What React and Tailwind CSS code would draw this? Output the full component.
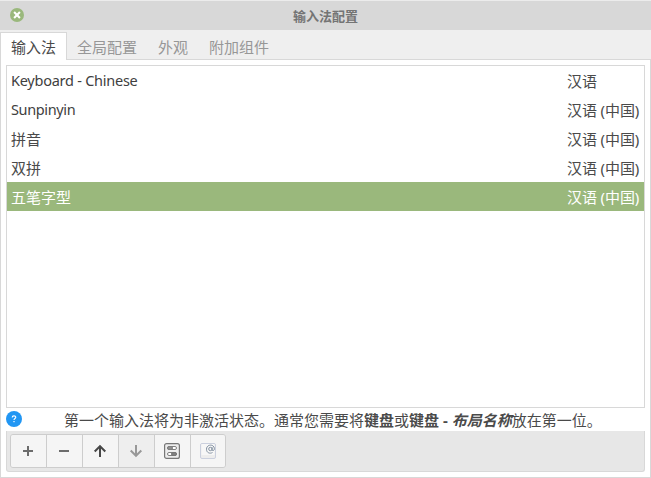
import React from "react";

const methods = [
  { name: "Keyboard - Chinese", lang: "汉语", latin: "pb-[2px] text-[14.5px] text-[#404040] tracking-[-0.25px]" },
  { name: "Sunpinyin", lang: "汉语 (中国)", latin: "pb-[2px] text-[14.5px] text-[#404040] tracking-[-0.37px]" },
  { name: "拼音", lang: "汉语 (中国)", latin: "" },
  { name: "双拼", lang: "汉语 (中国)", latin: "" },
  { name: "五笔字型", lang: "汉语 (中国)", latin: "", selected: true },
];

function CloseIcon() {
  return (
    <svg className="block" width="14" height="14" viewBox="0 0 14 14">
      <circle cx="7" cy="7" r="7" fill="#9ab87c" />
      <path d="M4.1 4.1l5.8 5.8M9.9 4.1l-5.8 5.8" stroke="#fff" strokeWidth="2.1" />
    </svg>
  );
}

function HelpIcon() {
  return (
    <svg width="16" height="16" viewBox="0 0 16 16">
      <circle cx="8" cy="8" r="8" fill="#2196f3" />
      <path d="M6.2 6.4c0-2 3.6-2 3.6-.1 0 1.2-1.8 1.2-1.8 2.7" fill="none" stroke="#fff" strokeWidth="1.1" />
      <rect x="7.4" y="10" width="1.2" height="1.2" fill="#fff" />
    </svg>
  );
}

function PlusIcon() {
  return (
    <svg width="16" height="16" viewBox="0 0 16 16">
      <path d="M3 8h10M8 3v10" stroke="#6c6c6c" strokeWidth="2" />
    </svg>
  );
}

function MinusIcon() {
  return (
    <svg width="16" height="16" viewBox="0 0 16 16">
      <path d="M3 8h10" stroke="#6c6c6c" strokeWidth="2" />
    </svg>
  );
}

function UpIcon() {
  return (
    <svg width="16" height="16" viewBox="0 0 16 16" fill="none" stroke="#484848" strokeWidth="2">
      <path d="M8 14V3.5M2.7 8.5L8 3.2l5.3 5.3" />
    </svg>
  );
}

function DownIcon() {
  return (
    <svg width="16" height="16" viewBox="0 0 16 16" fill="none" stroke="#989898" strokeWidth="2">
      <path d="M8 2v10.5M2.7 7.5L8 12.8l5.3-5.3" />
    </svg>
  );
}

function SettingsIcon() {
  return (
    <svg width="16" height="16" viewBox="0 0 16 16" fill="none">
      <rect x="0.6" y="0.6" width="14.8" height="14.8" rx="2" fill="#ededed" stroke="#777" strokeWidth="1.2" />
      <rect x="3.5" y="3.5" width="9" height="3" rx="1.5" fill="#fff" stroke="#808080" />
      <rect x="3.5" y="3.5" width="5" height="3" rx="1.5" fill="#909090" stroke="#808080" />
      <rect x="3.5" y="9.5" width="9" height="3" rx="1.5" fill="#fff" stroke="#808080" />
      <rect x="7.5" y="9.5" width="5" height="3" rx="1.5" fill="#808080" stroke="#777" />
    </svg>
  );
}

function KeyboardIcon() {
  return (
    <svg width="16" height="16" viewBox="0 0 16 16" fill="none">
      <rect x="0.5" y="0.5" width="15" height="15" rx="1.5" fill="#ededed" stroke="#cbd0de" />
      <path d="M1.5 1h13v11h-13z" fill="#f7f7f7" />
      <circle cx="10.4" cy="6" r="1.7" stroke="#8290a0" />
      <path d="M12.1 4.2v2.6c0 1.3 2.3 1.1 2.3-1 0-5-7.9-4.9-7.9.4 0 3.7 3.5 4.8 6 3.3" stroke="#8290a0" />
    </svg>
  );
}

const tools = [
  { label: "添加", Icon: PlusIcon },
  { label: "移除", Icon: MinusIcon },
  { label: "上移", Icon: UpIcon },
  { label: "下移", Icon: DownIcon, disabled: true },
  { label: "配置", Icon: SettingsIcon },
  { label: "键盘布局", Icon: KeyboardIcon },
];

export default function App() {
  return (
    <div className="flex h-[478px] w-[651px] flex-col overflow-hidden bg-white font-['Noto_Sans','Noto_Sans_CJK_SC',sans-serif] text-[15px] text-[#4a4a4a]">
      <header className="grid h-[30px] shrink-0 grid-cols-[1fr_auto_1fr] items-center border-t border-[#ececec] bg-[#d8d8d8] pl-[10px] pr-[10px]">
        <button className="pb-px" aria-label="关闭"><CloseIcon /></button>
        <h1 className="text-[13px] leading-[18px] font-bold text-[#747474]">输入法配置</h1>
      </header>

      <nav className="flex h-[30px] shrink-0 bg-[#efefef] leading-[20px] text-[#979797]">
        <div className="mt-[2px] flex w-[67px] justify-center border border-b-0 border-[#d8d8d8] bg-white pt-[4px] text-[#4a4a4a]">
          输入法
        </div>
        <div className="flex grow gap-[21px] border-b border-[#d8d8d8] pt-[7px] pl-[10px]">
          <span>全局配置</span>
          <span>外观</span>
          <span>附加组件</span>
        </div>
      </nav>

      <main className="flex min-h-0 grow flex-col border border-t-0 border-[#d8d8d8] px-[5px] pt-[5px] pb-[5px]">
        <ul className="h-[343px] shrink-0 border border-[#d8d8d8]">
          {methods.map((m) => (
            <li
              key={m.name}
              className={
                m.selected
                  ? "flex h-[29px] items-center bg-[#9ab87c] pl-[4px] leading-[20px] text-white"
                  : "flex h-[29px] items-center pl-[4px] leading-[20px]"
              }
            >
              <span className={"grow " + m.latin}>{m.name}</span>
              <span className="w-[77px] shrink-0 whitespace-nowrap tracking-[-0.1px]">{m.lang}</span>
            </li>
          ))}
        </ul>

        <div className="flex h-[23px] shrink-0 items-start">
          <div className="w-[58px] pt-[3px]"><HelpIcon /></div>
          <p className="pt-[2px] leading-[20px] whitespace-nowrap">
            第一个输入法将为非激活状态。通常您需要将<b>键盘</b>或<b>键盘 - <i>布局名称</i></b>放在第一位。
          </p>
        </div>

        <div className="h-[41px] shrink-0 rounded-b-[3px] border border-t-0 border-[#d8d8d8] bg-[#e7e7e7] pt-[3px] pl-[3px]">
          <div className="flex h-[34px] w-[216px] overflow-hidden rounded-[3px] border border-[#cdcdcd]">
            {tools.map(({ label, Icon, disabled }) => (
              <button
                key={label}
                aria-label={label}
                disabled={disabled}
                className={
                  disabled
                    ? "flex w-[36px] shrink-0 items-center border-r border-[#cdcdcd] bg-[#eeeeee] pl-[9px]"
                    : "flex w-[36px] shrink-0 items-center border-r border-[#cdcdcd] bg-[#f5f5f5] pl-[9px]"
                }
              >
                <Icon />
              </button>
            ))}
          </div>
        </div>
      </main>
    </div>
  );
}
